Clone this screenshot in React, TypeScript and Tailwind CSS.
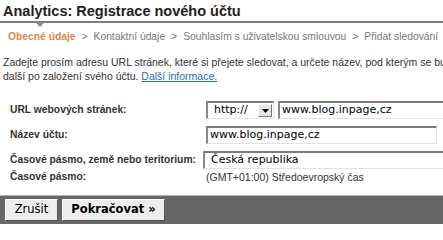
import React from 'react';

const sans = { fontFamily: '"Liberation Sans", Arial, sans-serif' };
const dejavu = { fontFamily: '"DejaVu Sans", Verdana, sans-serif' };

const steps = ['Kontaktní údaje', 'Souhlasím s uživatelskou smlouvou', 'Přidat sledování'];

function Field({ value, className = '' }: { value: string; className?: string }) {
  return (
    <div
      className={`h-[18px] bg-white border-t-2 border-l-2 border-b border-r border-t-[#7a7a7a] border-l-[#8a8a8a] border-b-[#e2e2e2] border-r-[#e2e2e2] flex items-center pl-[2px] text-[11px] text-black whitespace-nowrap overflow-hidden ${className}`}
      style={dejavu}
    >
      {value}
    </div>
  );
}

export default function App() {
  return (
    <div className="w-[443px] h-[230px] overflow-hidden bg-white text-[#333]" style={sans}>
      <h1 className="h-[21px] pl-[3px] pt-[2px] text-[14.5px] leading-[19px] font-bold text-[#222] whitespace-nowrap">
        Analytics: Registrace nového účtu
      </h1>
      <div className="relative h-[2px] bg-[#7d7d7d]">
        <svg className="absolute left-[35px] top-[1px]" width="10" height="6" viewBox="0 0 10 6">
          <polygon points="0,0 10,0 5,5" fill="#8a8a8a" />
        </svg>
      </div>

      <div className="mt-[7px] h-[14px] pl-[8px] flex text-[10.3px] leading-[14px] text-[#777] whitespace-nowrap">
        <span className="font-bold text-[#d9894c]">Obecné údaje</span>
        {steps.map((s) => (
          <React.Fragment key={s}>
            <span className="px-[6px]">&gt;</span>
            <span>{s}</span>
          </React.Fragment>
        ))}
      </div>

      <p className="mt-[11px] pl-[3px] text-[10.5px] leading-[14px] text-[#333] whitespace-nowrap">
        Zadejte prosím adresu URL stránek, které si přejete sledovat, a určete název, pod kterým se budou
        <br />
        další po založení svého účtu.{' '}
        <a href="#" className="text-[#2a6db5] underline">
          Další informace.
        </a>
      </p>

      <div className="mt-[18px] pl-[10px] grid grid-cols-[196px_1fr] gap-y-[7px] text-[10.3px]">
        <div className="h-[18px] flex items-center font-bold text-[#333]">URL webových stránek:</div>
        <div className="flex gap-[4px] w-[300px]">
          <div
            className="w-[68px] h-[18px] bg-white border-t-2 border-l-2 border-b border-r border-t-[#7a7a7a] border-l-[#8a8a8a] border-b-[#e2e2e2] border-r-[#e2e2e2] flex items-center justify-between pl-[6px] pr-[1px] text-[11px] text-black"
            style={dejavu}
          >
            <span>http://</span>
            <span className="w-[14px] h-[13px] bg-[#e6e6e6] border-t border-l border-white border-b border-r border-b-[#777] border-r-[#777] flex items-center justify-center">
              <svg width="7" height="4" viewBox="0 0 7 4">
                <polygon points="0,0 7,0 3.5,4" fill="#000" />
              </svg>
            </span>
          </div>
          <Field value="www.blog.inpage,cz" className="flex-1" />
        </div>

        <div className="h-[18px] flex items-center font-bold text-[#333]">Název účtu:</div>
        <Field value="www.blog.inpage,cz" className="w-[231px]" />

        <div className="h-[18px] flex items-center font-bold text-[#333] whitespace-nowrap">
          Časové pásmo, země nebo teritorium:
        </div>
        <Field value="Česká republika" className="w-[300px] -ml-[3px] pl-[6px]" />
      </div>

      <div className="pl-[10px] grid grid-cols-[196px_1fr] h-[14px] leading-[14px] mt-[1px]">
        <div className="font-bold text-[#333] text-[10.3px]">Časové pásmo:</div>
        <div className="text-[#333] text-[10.5px]">(GMT+01:00) Středoevropský čas</div>
      </div>

      <div className="mt-[11px] h-[29px] bg-[#666] border-t border-[#b5b5b5] flex items-center gap-[4px] pl-[5px]">
        <button
          className="h-[22px] w-[53px] bg-[#ededed] border border-t-white border-l-white border-b-[#555] border-r-[#555] text-[11.5px] text-black"
          style={dejavu}
        >
          Zrušit
        </button>
        <button
          className="h-[22px] w-[103px] bg-[#ededed] border border-t-white border-l-white border-b-[#555] border-r-[#555] text-[11.5px] font-bold text-black"
          style={dejavu}
        >
          Pokračovat »
        </button>
      </div>
    </div>
  );
}
